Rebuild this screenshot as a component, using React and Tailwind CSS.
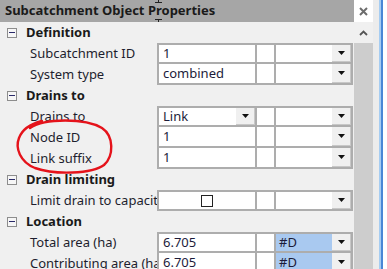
// Property grid panel: Subcatchment Object Properties
const font = { fontFamily: '"Noto Sans", "Open Sans", sans-serif' };

const Arrow = () => (
  <div className="w-[19px] h-full shrink-0 flex items-center justify-center bg-[#f0f0f0] border-r border-b border-[#c8c8c8]">
    <svg width="7" height="4" viewBox="0 0 7 4">
      <path d="M0 0h7L3.5 4z" fill="#111" />
    </svg>
  </div>
);

const Minus = () => (
  <div className="w-[10px] h-[10px] border border-[#8d8d8d] bg-[#f6f6f6] flex items-center justify-center ml-[7px] mr-[9px]">
    <div className="w-[6px] h-px bg-[#2a2a6a]" />
  </div>
);

const Header = ({ title }) => (
  <div className="h-[21px] shrink-0 flex items-center">
    <Minus />
    <span className="text-[13px] font-bold text-[#1a1a1a]">{title}</span>
  </div>
);

const Row = ({ label, first, value, combo, check, blue }) => (
  <div className="h-[21px] shrink-0 flex">
    <div className="w-[157px] shrink-0 pl-[30px] overflow-hidden whitespace-nowrap text-[13px] leading-[21px] text-[#1e1e2e]">
      {label}
    </div>
    <div
      className={`w-[196px] flex border-x-2 border-b-2 border-[#adadad] ${first ? "border-t-2" : ""}`}
    >
      <div className="w-[98px] shrink-0 flex items-center bg-white border-r-2 border-[#adadad]">
        {check ? (
          <div className="mx-auto w-[12px] h-[12px] border border-[#222]" />
        ) : (
          <>
            <span className="flex-1 pl-[4px] text-[13px] text-[#1c1c3a]">{value}</span>
            {combo && <Arrow />}
          </>
        )}
      </div>
      <div className="w-[19px] shrink-0 bg-white border-r-2 border-[#adadad]" />
      <div className={`flex-1 flex items-center ${blue ? "bg-[#a9c9f0]" : "bg-white"}`}>
        <span className="flex-1 pl-[3px] text-[13px] text-[#1c1c3a]">{blue ? "#D" : ""}</span>
        <Arrow />
      </div>
    </div>
  </div>
);

export default function App() {
  return (
    <div className="w-[387px] h-[269px] overflow-hidden bg-white flex relative" style={font}>
      <div className="w-[354px] shrink-0 bg-[#f0f0f0] flex flex-col">
        <div className="h-[22px] shrink-0 bg-[#a6a6a6] flex items-center pl-[5px]">
          <span className="text-[13px] font-bold text-[#1a1a1a] whitespace-nowrap">Subcatchment Object Properties</span>
        </div>
        <Header title="Definition" />
        <Row label="Subcatchment ID" first value="1" />
        <Row label="System type" value="combined" />
        <Header title="Drains to" />
        <Row label="Drains to" first value="Link" combo />
        <Row label="Node ID" value="1" />
        <Row label="Link suffix" value="1" />
        <Header title="Drain limiting" />
        <Row label="Limit drain to capacity" first check />
        <Header title="Location" />
        <Row label="Total area (ha)" first value="6.705" blue />
        <Row label="Contributing area (ha)" value="6.705" blue />
      </div>

      {/* scrollbar column */}
      <div className="w-[19px] shrink-0 flex flex-col">
        <div className="h-[22px] shrink-0 bg-white flex items-center justify-center">
          <svg width="9" height="9" viewBox="0 0 9 9">
            <path d="M1 1l7 7M8 1L1 8" stroke="#6d6d6d" strokeWidth="2" />
          </svg>
        </div>
        <div className="h-[21px] shrink-0 bg-[#f0f0f0] flex items-center justify-center">
          <svg width="9" height="6" viewBox="0 0 9 6">
            <path d="M1 5l3.5-3.5L8 5" stroke="#555" strokeWidth="1.8" fill="none" />
          </svg>
        </div>
        <div className="flex-1 bg-[#cdcdcd]" />
      </div>
      <div className="w-[6px] shrink-0 bg-[#ececec]" />
      <div className="w-[2px] shrink-0 bg-[#a6cdf2]" />
      <div className="w-[2px] shrink-0 bg-[#4a88d6]" />
      <div className="flex-1 bg-white" />

      {/* split cursor marks */}
      <div className="absolute left-[158px] top-0 w-px h-[3px] bg-[#222]" />
      <div className="absolute left-[155px] top-[2px] w-[7px] h-px bg-[#222]" />
      <div className="absolute left-[155px] top-[19px] w-[7px] h-px bg-[#222]" />
      <div className="absolute left-[158px] top-[19px] w-px h-[3px] bg-[#222]" />

      {/* red freehand annotation */}
      <svg className="absolute left-0 top-0 pointer-events-none" width="387" height="269">
        <path
          d="M30 128 C45 118, 85 118, 102 128 C114 136, 114 156, 104 165 C92 174, 55 175, 35 168 C20 162, 15 148, 19 138 C22 130, 30 124, 42 121"
          stroke="#e5131b"
          strokeWidth="2.4"
          fill="none"
          strokeLinecap="round"
        />
      </svg>
    </div>
  );
}
